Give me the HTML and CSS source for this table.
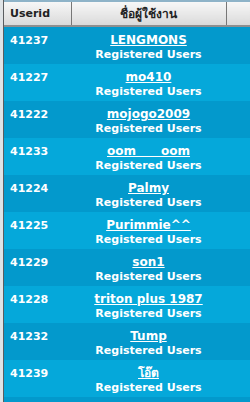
FILE: index.html
```html
<!DOCTYPE html>
<html>
<head>
<meta charset="utf-8">
<link rel="stylesheet" href="styles.css">
</head>
<body>
<div class="frame">
  <div class="topbar"></div>
  <table class="users">
    <colgroup><col class="w-id"><col class="w-name"><col class="w-x"></colgroup>
    <thead>
      <tr><th class="c-id">Userid</th><th class="c-name">ชื่อผู้ใช้งาน</th><th class="c-x"></th></tr>
    </thead>
    <tbody>
      <tr class="dark"><td class="c-id">41237</td><td class="c-name"><a href="#">LENGMONS</a><span class="grp">Registered Users</span></td><td class="c-x"></td></tr>
      <tr class="light"><td class="c-id">41227</td><td class="c-name"><a href="#">mo410</a><span class="grp">Registered Users</span></td><td class="c-x"></td></tr>
      <tr class="dark"><td class="c-id">41222</td><td class="c-name"><a href="#">mojogo2009</a><span class="grp">Registered Users</span></td><td class="c-x"></td></tr>
      <tr class="light"><td class="c-id">41233</td><td class="c-name"><a href="#">oom&nbsp;&nbsp;&nbsp;&nbsp;&nbsp;&nbsp;oom</a><span class="grp">Registered Users</span></td><td class="c-x"></td></tr>
      <tr class="dark"><td class="c-id">41224</td><td class="c-name"><a href="#">Palmy</a><span class="grp">Registered Users</span></td><td class="c-x"></td></tr>
      <tr class="light"><td class="c-id">41225</td><td class="c-name"><a href="#">Purimmie^^</a><span class="grp">Registered Users</span></td><td class="c-x"></td></tr>
      <tr class="dark"><td class="c-id">41229</td><td class="c-name"><a href="#">son1</a><span class="grp">Registered Users</span></td><td class="c-x"></td></tr>
      <tr class="light"><td class="c-id">41228</td><td class="c-name"><a href="#">triton plus 1987</a><span class="grp">Registered Users</span></td><td class="c-x"></td></tr>
      <tr class="dark"><td class="c-id">41232</td><td class="c-name"><a href="#">Tump</a><span class="grp">Registered Users</span></td><td class="c-x"></td></tr>
      <tr class="light"><td class="c-id">41239</td><td class="c-name"><a href="#">โอ๊ต</a><span class="grp">Registered Users</span></td><td class="c-x"></td></tr>
      <tr class="dark"><td class="c-id"></td><td class="c-name"></td><td class="c-x"></td></tr>
    </tbody>
  </table>
</div>
</body>
</html>
```
FILE: styles.css
```css
html, body {
  margin: 0;
  padding: 0;
  background: #dfe3e6;
  overflow: hidden;
}
.frame {
  margin-left: 3px;
  border-left: 1px solid #5a5d60;
  height: 402px;
  overflow: hidden;
}
.topbar {
  height: 2px;
  background: #8eb3c8;
}
.users {
  border-collapse: collapse;
  border-spacing: 0;
  font-family: "DejaVu Sans", Verdana, sans-serif;
  font-size: 11px;
  font-weight: bold;
  color: #fff;
  table-layout: fixed;
  width: 100%;
}
.w-id { width: 67px; }
.w-name { width: 155px; }
.users th {
  height: 23px;
  padding: 0;
  background: linear-gradient(#f7f7f7, #dadada);
  border-bottom: 2px solid #8f8f8f;
  color: #222;
  font-size: 11px;
  font-family: "DejaVu Sans", "Noto Sans", sans-serif;
}
.users th.c-id {
  text-align: left;
  padding-left: 6px;
  border-right: 1px solid #777;
}
.users th.c-name {
  border-left: 1px solid #fff;
  border-right: 1px solid #777;
  font-size: 12px;
}
.users th.c-x {
  border-left: 1px solid #fff;
}
.users td {
  padding: 0;
  height: 37px;
  vertical-align: top;
}
.users td.c-id {
  padding-left: 6px;
  padding-top: 7px;
  height: 30px;
}
.users td.c-name {
  text-align: center;
  padding-top: 5px;
  height: 32px;
  line-height: 16px;
}
.users a {
  color: #fff;
  font-size: 12px;
  text-decoration: underline;
  display: block;
}
.grp {
  display: block;
  font-size: 11px;
  line-height: 14px;
}
tr.dark td { background: #0399cc; }
tr.light td { background: #05a8da; }
```
